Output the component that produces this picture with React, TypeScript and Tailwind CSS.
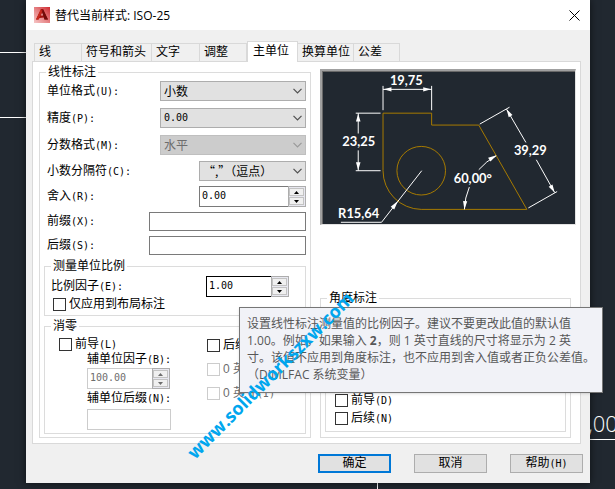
import React, { useState } from "react";

const TABS = [
  { name: "线", width: "w-[48px]" },
  { name: "符号和箭头", width: "w-[70px]" },
  { name: "文字", width: "w-[48px]" },
  { name: "调整", width: "w-[47px]" },
  { name: "主单位", width: "w-[51px]" },
  { name: "换算单位", width: "w-[56px]" },
  { name: "公差", width: "w-[46px]" },
];

interface LabelTextProps {
  text: string;
  hotkey?: string;
}

// Chinese caption followed by its access key in a fixed-width face
const LabelText: React.FC<LabelTextProps> = ({ text, hotkey }) => (
  <>
    {text}
    {hotkey && (
      <span className="font-['DejaVu_Sans_Mono',monospace] text-[10px] leading-3">
        {hotkey}
      </span>
    )}
  </>
);

interface RowProps extends LabelTextProps {
  id: string;
  children: React.ReactNode;
}

const Row: React.FC<RowProps> = ({ id, text, hotkey, children }) => (
  <div className="flex items-center justify-between">
    <label htmlFor={id}>
      <LabelText text={text} hotkey={hotkey} />
    </label>
    {children}
  </div>
);

interface DropDownProps {
  id: string;
  value: string;
  width: string;
  mono?: boolean;
  disabled?: boolean;
}

const DropDown: React.FC<DropDownProps> = ({
  id,
  value,
  width,
  mono,
  disabled,
}) => (
  <div className={`relative ${width}`}>
    <select
      id={id}
      disabled={disabled}
      className={`block h-5 w-full appearance-none border pl-[3px] pr-4 leading-4 ${
        mono
          ? "font-['DejaVu_Sans_Mono',monospace] text-[10px]"
          : "font-['Noto_Sans_CJK_SC',sans-serif]"
      } ${
        disabled
          ? "border-[#bfbfbf] bg-[#cccccc] text-[#6d6d6d] opacity-100"
          : "border-[#adadad] bg-[#e1e1e1]"
      }`}
    >
      <option>{value}</option>
    </select>
    <svg
      className="pointer-events-none absolute right-1 top-[7px]"
      width="9"
      height="6"
      viewBox="0 0 9 6"
      fill="none"
      stroke={disabled ? "#9a9a9a" : "#505050"}
      strokeWidth="1.2"
    >
      <path d="M0.5 0.8 4.5 4.8 8.5 0.8" />
    </svg>
  </div>
);

interface SpinnerProps {
  id: string;
  initial: string;
  width: string;
  border: string;
  disabled?: boolean;
}

const Spinner: React.FC<SpinnerProps> = ({
  id,
  initial,
  width,
  border,
  disabled,
}) => {
  const [value, setValue] = useState(initial);

  const step = (delta: number) => {
    setValue((Number(value) + delta).toFixed(2));
  };

  const arrow = disabled ? "fill-[#6d6d6d]" : "fill-black";
  const buttonClass =
    "flex flex-1 items-center justify-center border border-[#c3c3c3] bg-[#f0f0f0]";

  return (
    <div className={`flex h-[21px] ${width}`}>
      <input
        id={id}
        value={value}
        disabled={disabled}
        onChange={(e) => setValue(e.target.value)}
        className={`min-w-0 flex-1 border border-r-0 bg-white pb-[3px] pl-[2px] font-['DejaVu_Sans_Mono',monospace] text-[10px] outline-none ${border} ${
          disabled ? "text-[#6d6d6d]" : ""
        }`}
      />
      <div className="flex w-[18px] flex-col gap-px border border-[#adadad] bg-[#e8e8f0] p-px pl-0">
        <button
          type="button"
          disabled={disabled}
          onClick={() => step(1)}
          className={buttonClass}
        >
          <svg width="5" height="3" viewBox="0 0 5 3" className={arrow}>
            <path d="M2.5 0 5 3H0z" />
          </svg>
        </button>
        <button
          type="button"
          disabled={disabled}
          onClick={() => step(-1)}
          className={buttonClass}
        >
          <svg width="5" height="3" viewBox="0 0 5 3" className={arrow}>
            <path d="M0 0h5L2.5 3z" />
          </svg>
        </button>
      </div>
    </div>
  );
};

interface CheckProps extends LabelTextProps {
  disabled?: boolean;
}

const Check: React.FC<CheckProps> = ({ text, hotkey, disabled }) => (
  <label
    className={`flex h-[15px] items-center gap-[3px] whitespace-nowrap ${
      disabled ? "text-[#6d6d6d]" : ""
    }`}
  >
    <input
      type="checkbox"
      disabled={disabled}
      className={`size-[13px] shrink-0 appearance-none border bg-white checked:bg-[#0078d7] ${
        disabled ? "border-[#cccccc]" : "border-[#333333]"
      }`}
    />
    <span>
      <LabelText text={text} hotkey={hotkey} />
    </span>
  </label>
);

interface GroupProps {
  title: string;
  className?: string;
  bodyClass: string;
  children?: React.ReactNode;
}

const Group: React.FC<GroupProps> = ({
  title,
  className = "",
  bodyClass,
  children,
}) => (
  <fieldset className={`min-w-0 border border-[#dcdcdc] ${className}`}>
    <legend className="ml-[6px] px-[2px] leading-[13px]">{title}</legend>
    <div className={bodyClass}>{children}</div>
  </fieldset>
);

const Preview: React.FC = () => (
  <div className="border-2 border-b border-r border-[#a0a0a0] border-b-[#e3e3e3] border-r-[#e3e3e3]">
    <svg
      viewBox="322 71 254 153"
      className="block w-full border-l border-t border-[#696969] bg-[#212830]"
      fill="none"
    >
      <g stroke="#a87b00">
        <path d="M382.5 170.5V112.5H431.5V124.5H479L527.5 209.5H421A39 39 0 0 1 382.5 170.5" />
        <circle cx="421" cy="170.5" r="24.5" />
      </g>
      <g stroke="#ffffff">
        <path d="M382.5 85V109.5M431.5 85V109.5M382.5 88.5H431.5" />
        <path d="M355 112.5H380M355 170.5H380M357.5 112.5V133M357.5 150V170.5" />
        <path d="M340 222.5H381L421.5 170.5" />
        <path d="M480 123.5 510 106.5M529 208 558 191.5M507 108.5 526.5 142M537 159.5 555.5 192.5" />
        <path d="M496.5 155.5A62 62 0 0 0 479 169.5M469.5 187A62 62 0 0 0 464.5 209.5" />
      </g>
      <g fill="#ffffff">
        <path d="M383 88.5 391 86.3V90.7zM431 88.5 423 86.3V90.7z" />
        <path d="M357.5 113 355.2 121H359.8zM357.5 170 355.2 162H359.8z" />
        <path d="M397.5 201 393.8 209.6 390.2 206.8z" />
        <path d="M507 108.5 513 114.3 509.2 116.5zM555.5 192.5 549.5 186.7 553.3 184.5z" />
        <path d="M497 155 490.8 161.2 488.4 157.4zM464.5 209.5 463.2 201 467.4 201.4z" />
      </g>
      <g
        fill="#ffffff"
        textAnchor="middle"
        className="font-['Lato',sans-serif] text-[13px] font-bold"
      >
        <text x="406" y="84">19,75</text>
        <text x="358" y="146">23,25</text>
        <text x="358" y="218">R15,64</text>
        <text x="531" y="155">39,29</text>
        <text x="473" y="183">60,00°</text>
      </g>
    </svg>
  </div>
);

const CanvasBackdrop: React.FC = () => (
  <div className="absolute inset-0 overflow-hidden">
    <div className="absolute left-0 top-[52px] h-px w-7 bg-white" />
    <div className="absolute left-0 top-[117px] h-px w-7 bg-white" />
    <div className="absolute bottom-0 left-[377px] h-2 w-px bg-white" />
    <div className="absolute right-0 top-[439px] h-px w-7 bg-white" />
    <span className="absolute left-[588px] top-[408px] font-['Open_Sans',sans-serif] text-[22px] font-light leading-[30px] text-white">
      ,00
    </span>
  </div>
);

const Tooltip: React.FC = () => (
  <div
    role="tooltip"
    className="absolute left-[239px] top-[307px] h-[86px] w-[364px] whitespace-nowrap border border-[#767676] bg-[#f1f2f7] px-[7px] py-[7px] font-['Open_Sans','Noto_Sans_CJK_SC',sans-serif] leading-[17px] text-[#575757] shadow-sm"
  >
    设置线性标注测量值的比例因子。建议不要更改此值的默认值
    <br />
    1.00。例如，如果输入 <b>2</b>，则 1 英寸直线的尺寸将显示为 2 英
    <br />
    寸。该值不应用到角度标注，也不应用到舍入值或者正负公差值。
    <br />
    （DIMLFAC 系统变量）
  </div>
);

const DialogButton: React.FC<{
  primary?: boolean;
  children: React.ReactNode;
}> = ({ primary, children }) => (
  <button
    type="button"
    className={`h-[19px] w-[73px] bg-[#e1e1e1] leading-[15px] ${
      primary ? "border-2 border-[#0078d7]" : "border border-[#adadad]"
    }`}
  >
    {children}
  </button>
);

const App: React.FC = () => {
  const [activeTab, setActiveTab] = useState("主单位");

  return (
    <div className="relative min-h-screen overflow-hidden bg-[#212830] pb-[6px] pl-[26px] pr-[25px] font-['Liberation_Sans','Noto_Sans_CJK_SC',sans-serif] text-[12px] leading-[15px] text-black">
      <CanvasBackdrop />

      <div className="relative bg-[#f0f0f0] pb-[10px] shadow-[0_0_8px_rgba(0,0,0,0.6)]">
        <header className="flex h-[30px] items-center bg-white pl-2 pr-[10px]">
          <svg width="16" height="16" viewBox="0 0 16 16">
            <defs>
              <linearGradient id="badge" x1="0" y1="1" x2="1" y2="0">
                <stop offset="0" stopColor="#f6c6c6" />
                <stop offset="0.5" stopColor="#e58082" />
                <stop offset="1" stopColor="#cf2a30" />
              </linearGradient>
            </defs>
            <rect width="16" height="16" fill="url(#badge)" />
            <path d="M2 12.5 7 2H9L14 12.5H10.5L9.8 10.5 5.5 11 4.5 12.5z" fill="#a3120e" />
            <path d="M7 2 2 12.5H4.5L8 5z" fill="#c8281c" />
            <path d="M6.8 8.6 8.2 5.4 9.2 8.4z" fill="#e8a0a0" />
            <path d="M9 2 14 12.5 10.5 12.5 8.2 5z" fill="#720c0a" />
          </svg>
          <h1 className="ml-[5px] flex-1 font-['Open_Sans','Noto_Sans_CJK_SC',sans-serif]">
            替代当前样式: ISO-25
          </h1>
          <button type="button" aria-label="关闭">
            <svg width="11" height="11" viewBox="0 0 11 11" stroke="#000000">
              <path d="M0.5 0.5 10.5 10.5M10.5 0.5 0.5 10.5" />
            </svg>
          </button>
        </header>

        <div className="pl-[6px] pr-[9px] pt-[11px]">
          <div role="tablist" className="flex items-end pl-[2px]">
            {TABS.map((tab) => {
              const active = tab.name === activeTab;
              return (
                <button
                  key={tab.name}
                  type="button"
                  role="tab"
                  aria-selected={active}
                  onClick={() => setActiveTab(tab.name)}
                  className={`whitespace-nowrap border-t border-r border-[#d9d9d9] text-left first:border-l ${
                    tab.width
                  } ${
                    active
                      ? "relative -mb-px h-[21px] border-l bg-white pb-px pl-[5px]"
                      : "h-[18px] pl-1"
                  }`}
                >
                  {tab.name}
                </button>
              );
            })}
          </div>

          <main className="grid grid-cols-[17fr_16fr] gap-x-[9px] border border-[#d9d9d9] bg-white pb-[5px] pl-[6px] pr-1 pt-1">
            <Group title="线性标注" bodyClass="px-1 pb-[3px]">
              <div className="flex flex-col gap-[7px] pl-[3px] pt-[2px]">
                <Row id="unit-format" text="单位格式" hotkey="(U):">
                  <DropDown id="unit-format" value="小数" width="w-[146px]" />
                </Row>
                <Row id="precision" text="精度" hotkey="(P):">
                  <DropDown
                    id="precision"
                    value="0.00"
                    width="w-[146px]"
                    mono
                  />
                </Row>
                <Row id="fraction-format" text="分数格式" hotkey="(M):">
                  <DropDown
                    id="fraction-format"
                    value="水平"
                    width="w-[146px]"
                    disabled
                  />
                </Row>
              </div>
              <div className="flex flex-col gap-[5px] pl-[3px] pt-[6px]">
                <Row id="separator" text="小数分隔符" hotkey="(C):">
                  <DropDown
                    id="separator"
                    value="“,”（逗点）"
                    width="w-[107px]"
                  />
                </Row>
                <Row id="round-off" text="舍入" hotkey="(R):">
                  <Spinner
                    id="round-off"
                    initial="0.00"
                    width="w-[107px]"
                    border="border-[#7a7a7a]"
                  />
                </Row>
                <Row id="prefix" text="前缀" hotkey="(X):">
                  <input
                    id="prefix"
                    className="h-[19px] w-[157px] border border-[#7a7a7a] px-1"
                  />
                </Row>
                <Row id="suffix" text="后缀" hotkey="(S):">
                  <input
                    id="suffix"
                    className="h-[19px] w-[157px] border border-[#7a7a7a] px-1"
                  />
                </Row>
              </div>

              <Group
                title="测量单位比例"
                className="mt-[5px]"
                bodyClass="pb-[3px] pl-[6px] pr-4"
              >
                <div className="pt-[3px]">
                  <Row id="scale" text="比例因子" hotkey="(E):">
                    <Spinner
                      id="scale"
                      initial="1.00"
                      width="w-[83px]"
                      border="border-black"
                    />
                  </Row>
                </div>
                <div className="pl-[2px]">
                  <Check text="仅应用到布局标注" />
                </div>
              </Group>

              <Group title="消零" className="mt-1" bodyClass="pb-[3px] pl-[14px]">
                <div className="grid grid-cols-[148px_1fr] pt-1">
                  <div>
                    <Check text="前导" hotkey="(L)" />
                    <div className="flex flex-col items-start pl-7">
                      <label htmlFor="sub-factor" className="h-4">
                        <LabelText text="辅单位因子" hotkey="(B):" />
                      </label>
                      <Spinner
                        id="sub-factor"
                        initial="100.00"
                        width="w-[83px]"
                        border="border-[#cccccc]"
                        disabled
                      />
                      <label htmlFor="sub-suffix" className="h-5 pt-[2px]">
                        <LabelText text="辅单位后缀" hotkey="(N):" />
                      </label>
                      <input
                        id="sub-suffix"
                        disabled
                        className="h-[21px] w-[84px] border border-[#cccccc] px-1"
                      />
                    </div>
                  </div>
                  <div className="flex flex-col gap-[9px] overflow-hidden pt-px">
                    <Check text="后续" hotkey="(T)" />
                    <Check text="0 英尺" hotkey="(F)" disabled />
                    <Check text="0 英寸" hotkey="(I)" disabled />
                  </div>
                </div>
              </Group>
            </Group>

            <div className="flex flex-col justify-between pt-[3px]">
              <Preview />
              <Group
                title="角度标注"
                className="mr-[5px]"
                bodyClass="px-1 pb-[5px] pt-[73px]"
              >
                <div className="flex flex-col gap-[3px] border border-[#dcdcdc] pb-[5px] pl-[9px] pt-[14px]">
                  <Check text="前导" hotkey="(D)" />
                  <Check text="后续" hotkey="(N)" />
                </div>
              </Group>
            </div>
          </main>
        </div>

        <footer className="mt-[10px] flex justify-end gap-[23px] pr-[7px]">
          <DialogButton primary>确定</DialogButton>
          <DialogButton>取消</DialogButton>
          <DialogButton>
            <LabelText text="帮助" hotkey="(H)" />
          </DialogButton>
        </footer>
      </div>

      <Tooltip />

      <div className="pointer-events-none absolute left-[190px] top-[443px] origin-left -rotate-45 font-['Open_Sans',sans-serif] text-[18px] font-bold leading-6 text-[#00a6ee]">
        www.solidworkszxw.com
      </div>
    </div>
  );
};

export default App;
